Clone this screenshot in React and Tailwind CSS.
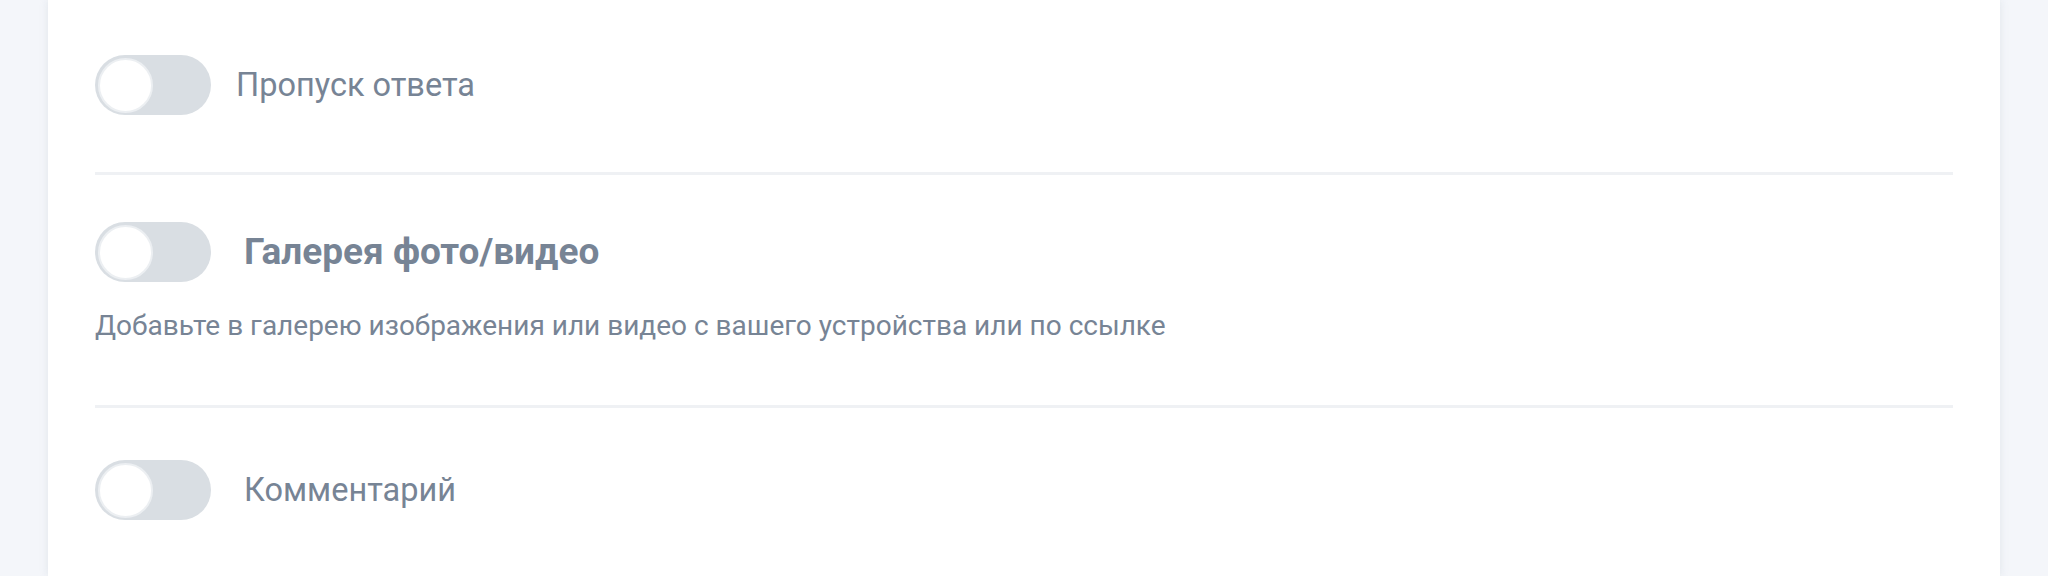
const Toggle = () => (
  <div className="w-[116px] h-[60px] shrink-0 rounded-full bg-[#d9dee3] p-[3px] flex items-center">
    <div className="w-[55px] h-[55px] rounded-full bg-white border-2 border-[#eceff2]" />
  </div>
)

const App = () => {
  return (
    <div className="min-h-screen bg-[#f4f6fa] px-[48px] font-['Roboto',sans-serif] text-[#778495]">
      <div className="bg-white min-h-[576px] px-[47px] shadow-[0_0_8px_rgba(200,208,218,0.45)]">
        <div className="pt-[55px] pb-[57px] flex items-center gap-[25px]">
          <Toggle />
          <span className="text-[32.5px] leading-[40px]">Пропуск ответа</span>
        </div>

        <div className="h-[3px] bg-[#eff1f4]" />

        <div className="pt-[47px] pb-[63px]">
          <div className="flex items-center gap-[33px]">
            <Toggle />
            <span className="text-[37px] leading-[40px] font-bold">Галерея фото/видео</span>
          </div>
          <p className="mt-[28px] text-[28px] leading-[32px]">
            Добавьте в галерею изображения или видео с вашего устройства или по ссылке
          </p>
        </div>

        <div className="h-[3px] bg-[#eff1f4]" />

        <div className="pt-[52px] pb-[40px] flex items-center gap-[33px]">
          <Toggle />
          <span className="text-[32.5px] leading-[40px]">Комментарий</span>
        </div>
      </div>
    </div>
  )
}

export default App
